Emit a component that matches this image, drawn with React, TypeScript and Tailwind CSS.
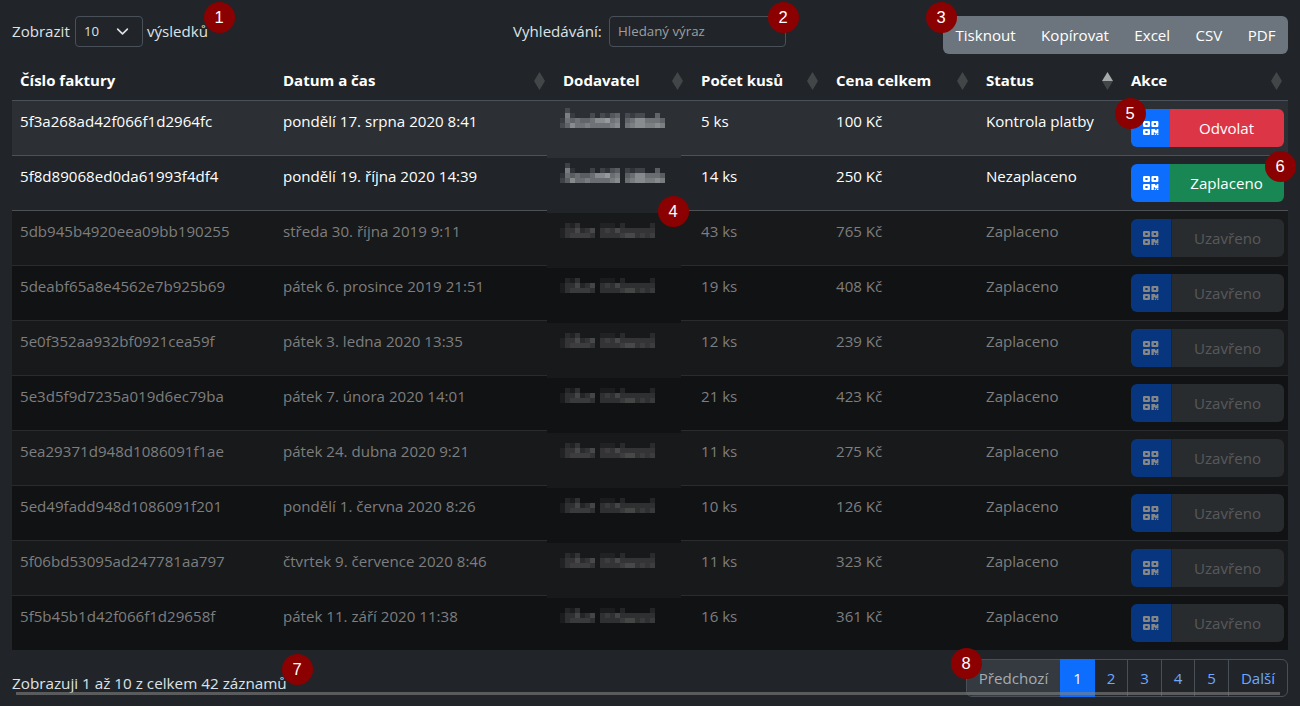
import { Fragment } from "react";

const qrPath =
  "M0 1.2A1.2 1.2 0 0 1 1.2 0h4.6A1.2 1.2 0 0 1 7 1.2v3.6A1.2 1.2 0 0 1 5.8 6H1.2A1.2 1.2 0 0 1 0 4.8zM2.4 2.1v1.8h2.2V2.1zM8.4 1.2A1.2 1.2 0 0 1 9.6 0h4.6a1.2 1.2 0 0 1 1.2 1.2v3.6A1.2 1.2 0 0 1 14.2 6H9.6a1.2 1.2 0 0 1-1.2-1.2zM10.8 2.1v1.8H13V2.1zM0 9.2A1.2 1.2 0 0 1 1.2 8h4.6A1.2 1.2 0 0 1 7 9.2v3.6A1.2 1.2 0 0 1 5.8 14H1.2A1.2 1.2 0 0 1 0 12.8zM2.4 10.1v1.8h2.2v-1.8zM8.4 8h3.8v1.2h1.6V8h1.6v4.4h-3.5v-1.2h-1.1V14H8.4zM11.8 12.9h1.3V14h-1.3zM14.1 12.9h1.3V14h-1.3z";

function QrIcon() {
  return (
    <svg width="16" height="14" viewBox="0 0 16 14" className="block">
      <path d={qrPath} fill="currentColor" fillRule="evenodd" />
    </svg>
  );
}

const nameA = [
  "020000000000000000000",
  "061000202134021220040",
  "154544577856045775554",
  "247556555567056776676",
];
const nameB = [
  "0213000011102000002",
  "1335235034353333333",
  "1344443033334553434",
];

function Mosaic({ rows, dim }: { rows: string[]; dim: boolean }) {
  const w = rows[0].length * 5;
  const h = rows.length * 5;
  return (
    <svg width={w} height={h} shapeRendering="crispEdges" className="block" fill={dim ? "#6d6d6e" : "#a5a7aa"}>
      {rows.map((r, y) => (
        <Fragment key={y}>
          {r.split("").map((v, x) =>
            v === "0" ? null : <rect key={x} x={x * 5} y={y * 5} width="5" height="5" opacity={Number(v) / 9} />
          )}
        </Fragment>
      ))}
    </svg>
  );
}

function Badge({ n, className }: { n: number; className: string }) {
  return (
    <span
      className={`absolute z-10 flex h-[31px] w-[31px] items-center justify-center rounded-full bg-[#8b0000] pr-px font-['Liberation_Sans'] text-[16.5px] leading-none text-white ${className}`}
    >
      {n}
    </span>
  );
}

const grid = "grid grid-cols-[263px_280px_138px_135px_150px_145px_165px]";

const heads = ["Číslo faktury", "Datum a čas", "Dodavatel", "Počet kusů", "Cena celkem", "Status", "Akce"];

const rows = [
  ["5f3a268ad42f066f1d2964fc", "pondělí 17. srpna 2020 8:41", "5 ks", "100 Kč", "Kontrola platby"],
  ["5f8d89068ed0da61993f4df4", "pondělí 19. října 2020 14:39", "14 ks", "250 Kč", "Nezaplaceno"],
  ["5db945b4920eea09bb190255", "středa 30. října 2019 9:11", "43 ks", "765 Kč", "Zaplaceno"],
  ["5deabf65a8e4562e7b925b69", "pátek 6. prosince 2019 21:51", "19 ks", "408 Kč", "Zaplaceno"],
  ["5e0f352aa932bf0921cea59f", "pátek 3. ledna 2020 13:35", "12 ks", "239 Kč", "Zaplaceno"],
  ["5e3d5f9d7235a019d6ec79ba", "pátek 7. února 2020 14:01", "21 ks", "423 Kč", "Zaplaceno"],
  ["5ea29371d948d1086091f1ae", "pátek 24. dubna 2020 9:21", "11 ks", "275 Kč", "Zaplaceno"],
  ["5ed49fadd948d1086091f201", "pondělí 1. června 2020 8:26", "10 ks", "126 Kč", "Zaplaceno"],
  ["5f06bd53095ad247781aa797", "čtvrtek 9. července 2020 8:46", "11 ks", "323 Kč", "Zaplaceno"],
  ["5f5b45b1d42f066f1d29658f", "pátek 11. září 2020 11:38", "16 ks", "361 Kč", "Zaplaceno"],
];

function Row({ row, i }: { row: string[]; i: number }) {
  const dim = i > 1;
  const last = i === rows.length - 1;
  const bg = i === 0 ? "bg-[#2c3034]" : i === 1 ? "bg-[#212529]" : i % 2 === 0 ? "bg-[#18191a]" : "bg-[#111214]";
  const border = i < 2 ? "border-[#4d5154]" : "border-[#292b2e]";
  const action =
    i === 0
      ? "bg-[#dc3545] text-white"
      : i === 1
        ? "bg-[#198754] text-white"
        : "border-l border-[#202427] bg-[#292c2f] text-[#58595b]";
  return (
    <div
      className={`${grid} pt-[8px] leading-6 ${last ? "h-[54px]" : "h-[55px] border-b"} ${bg} ${border} ${dim ? "text-[#7d7e7f]" : "text-white"}`}
    >
      <span className="pl-2">{row[0]}</span>
      <span className="pl-2">{row[1]}</span>
      <div
        className={`-ml-2 -mt-[6px] w-[134px] pl-[13px] ${last ? "h-[52px]" : "h-[55px]"} ${bg} ${dim ? "pt-[10px]" : "pt-[5px]"}`}
      >
        <Mosaic rows={dim ? nameB : nameA} dim={dim} />
      </div>
      <span className="pl-2">{row[2]}</span>
      <span className="pl-2">{row[3]}</span>
      <span className="pl-2">{row[4]}</span>
      <div className="relative flex pl-2">
        <div className="flex h-[38px] w-[153px] overflow-hidden rounded-md">
          <div
            className={`flex shrink-0 items-center pl-3 ${dim ? "w-[40px] bg-[#07367e] text-[#858687]" : "w-[39px] bg-[#0d6efd] text-white"}`}
          >
            <QrIcon />
          </div>
          <div className={`flex flex-1 items-center justify-center pr-px ${action}`}>
            {i === 0 ? "Odvolat" : i === 1 ? "Zaplaceno" : "Uzavřeno"}
          </div>
        </div>
        {i === 0 && <Badge n={5} className="-left-[8px] -top-[11px]" />}
        {i === 1 && <Badge n={6} className="left-[142px] -top-[13px]" />}
      </div>
    </div>
  );
}

export default function App() {
  return (
    <div className="relative h-[706px] w-[1300px] overflow-hidden bg-[#212529] px-3 pt-4 font-['Open_Sans','Noto_Sans',sans-serif] text-[15.1px]">
      <div className="flex h-[45px] items-start text-[#dee2e6]">
        <div className="relative flex h-[31px] w-[501px] items-center">
          <span className="w-[63px]">Zobrazit</span>
          <div className="flex h-[31px] w-[68px] items-center justify-between rounded border border-[#495057] pl-2 pr-[13px] text-[13.2px]">
            10
            <svg width="13" height="13" viewBox="0 0 16 16" fill="none" stroke="#dee2e6" strokeWidth="2" strokeLinecap="round" strokeLinejoin="round">
              <path d="m2 5 6 6 6-6" />
            </svg>
          </div>
          <span className="pl-1">výsledků</span>
          <Badge n={1} className="left-[192px] -top-[14px]" />
        </div>
        <div className="relative flex h-[31px] w-[430px] items-center">
          <span className="w-[96px]">Vyhledávání:</span>
          <div className="flex h-[31px] w-[177px] items-center rounded border border-[#495057] pl-2 text-[13.3px] text-[#9b9fa3]">
            Hledaný výraz
          </div>
          <Badge n={2} className="left-[255px] -top-[14px]" />
        </div>
        <div className="relative flex h-[38px] w-[345px] items-center justify-between rounded-md bg-[#6c757d] px-[12.5px] text-white">
          <span>Tisknout</span>
          <span>Kopírovat</span>
          <span>Excel</span>
          <span>CSV</span>
          <span>PDF</span>
          <Badge n={3} className="-left-[17px] -top-[14px]" />
        </div>
      </div>

      <div className={`${grid} h-10 border-b border-[#495057] text-[15px] font-bold text-white`}>
        {heads.map((h, i) => (
          <div key={h} className={`flex items-center justify-between pb-[1px] pl-2 ${i === 6 ? "pr-[6px]" : "pr-[10px]"}`}>
            {h}
            {i > 0 && (
              <svg width="11" height="18" viewBox="0 0 11 18" className="mt-[2px]">
                <path d="M5.5 0 11 9H0z" fill={i === 5 ? "#a6a8a9" : "#424649"} />
                <path d="M5.5 18 11 9H0z" fill="#424649" />
              </svg>
            )}
          </div>
        ))}
      </div>

      <div className="relative">
        {rows.map((r, i) => (
          <Row key={r[0]} row={r} i={i} />
        ))}
        <Badge n={4} className="left-[646px] top-[95px]" />
      </div>

      <div className="flex justify-between pt-[9px] text-[#dee2e6]">
        <div className="relative pt-[12px] text-[15.25px] leading-6">
          Zobrazuji 1 až 10 z celkem 42 záznamů
          <Badge n={7} className="left-[270px] -top-[5px]" />
        </div>
        <div className="relative flex h-[38px] w-[322px] rounded-md border border-[#495057] text-[#6ea8fe]">
          <span className="flex w-[93px] items-center justify-center rounded-l-md bg-[#343a40] text-[#a7abaf]">Předchozí</span>
          <span className="-my-px flex w-[35px] items-center justify-center bg-[#0d6efd] text-white">1</span>
          <span className="flex w-[33px] items-center justify-center border-r border-[#495057]">2</span>
          <span className="flex w-[34px] items-center justify-center border-r border-[#495057]">3</span>
          <span className="flex w-[33px] items-center justify-center border-r border-[#495057]">4</span>
          <span className="flex w-[34px] items-center justify-center border-r border-[#495057]">5</span>
          <span className="flex flex-1 items-center justify-center">Další</span>
          <Badge n={8} className="-left-[16px] -top-[12px]" />
        </div>
      </div>
      <div className="absolute left-4 top-[692px] h-[3px] w-[1264px] bg-[#808080]/60" />
    </div>
  );
}
